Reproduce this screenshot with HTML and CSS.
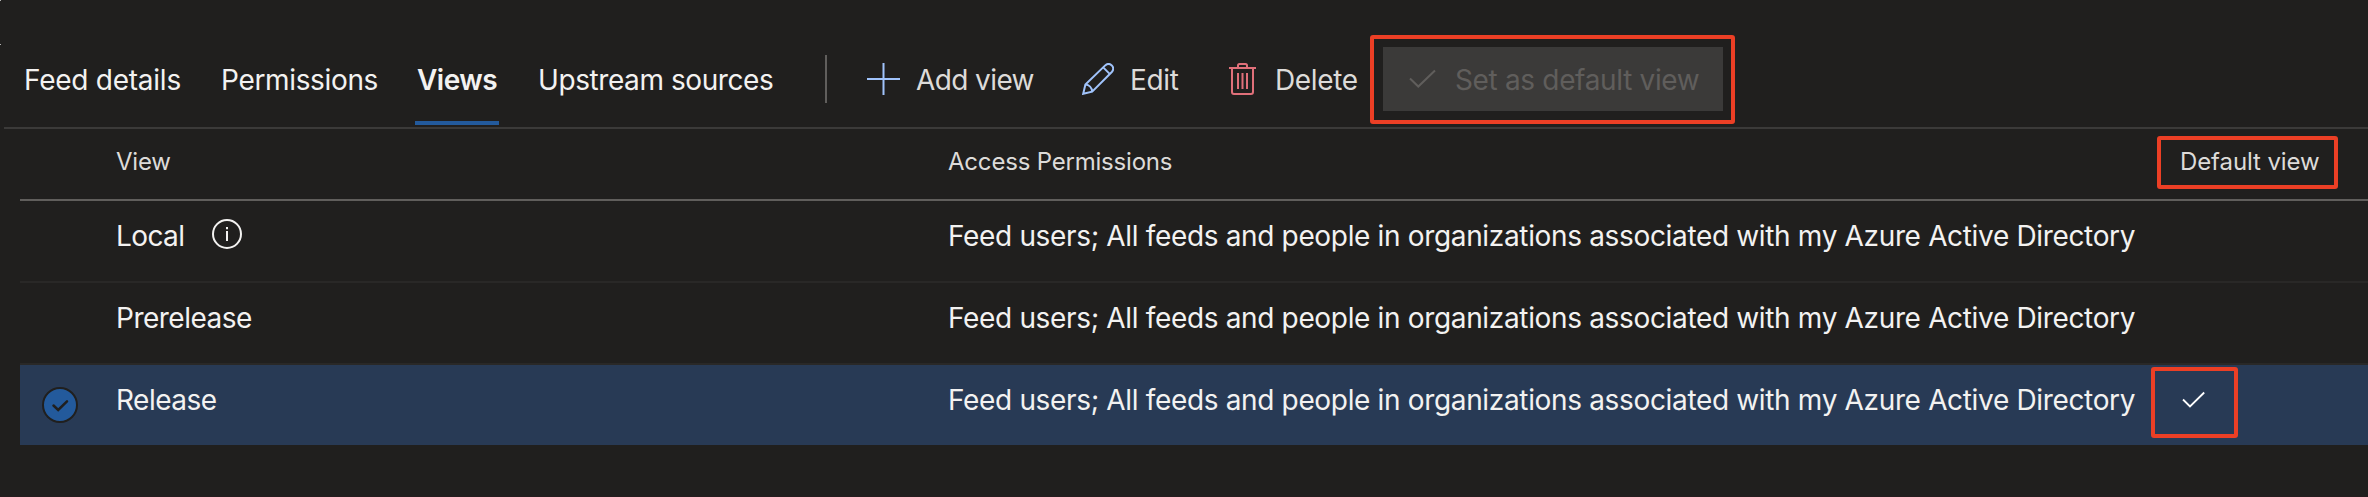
FILE: index.html
```
<!DOCTYPE html>
<html lang="en">
<head>
<meta charset="utf-8">
<title>Feed settings</title>
<link rel="stylesheet" href="styles.css">
</head>
<body>
<i class="corner corner-top"></i>
<i class="corner corner-bottom"></i>
<header class="toolbar">
  <nav class="tabs">
    <a class="tab tab-details"><span>Feed details</span></a>
    <a class="tab tab-permissions"><span>Permissions</span></a>
    <a class="tab tab-views active"><span>Views</span></a>
    <a class="tab tab-upstream"><span>Upstream sources</span></a>
  </nav>
  <div class="divider"></div>
  <div class="commands">
    <button class="command add"><svg class="icon" width="34" height="32" viewBox="0 0 34 32"><path d="M16.500 0v32M0 16h33" stroke="#a0c3fb" stroke-width="2" fill="none"/></svg><span>Add view</span></button>
    <button class="command edit"><svg class="icon" width="32" height="32" viewBox="0 0 32 32" fill="none" stroke="#a0c3fb" stroke-width="2"><path d="M1.200 30.800 3.400 21.500 23.200 2.400a5 5 0 0 1 6.600 0 5 5 0 0 1 0 6.600L10.200 28.600ZM21.200 4.400l6.700 6.700M3.400 21.500c3.600.3 6.500 3.200 6.800 7.100"/></svg><span>Edit</span></button>
    <button class="command delete"><svg class="icon" width="27" height="32" viewBox="0 0 27 32" fill="none" stroke="#e0707a" stroke-width="2"><path d="M0 5h27M9 5V2.500Q9 1 10.500 1h6Q18 1 18 2.500V5M3 5v24q0 2 2 2h17q2 0 2-2V5M9 10v16M13.500 10v16M18 10v16"/></svg><span>Delete</span></button>
    <div class="callout callout-button">
      <button class="command default" disabled><svg class="icon" width="28" height="20" viewBox="0 0 28 20"><path d="m1 9.500 8.300 8L26 1.500" stroke="#605e5c" stroke-width="2" fill="none"/></svg><span>Set as default view</span></button>
    </div>
  </div>
</header>
<main class="table">
  <div class="row head">
    <div class="name"><span>View</span></div>
    <div class="access"><span>Access Permissions</span></div>
    <div class="callout callout-head"><span>Default view</span></div>
  </div>
  <div class="row">
    <div class="name"><span class="local">Local</span><svg class="info" width="30" height="30" viewBox="0 0 30 30"><circle cx="15" cy="15" r="14" fill="none" stroke="#f3f2f1" stroke-width="2"/><path d="M15 12v10M15 8v2.200" stroke="#f3f2f1" stroke-width="2"/></svg></div>
    <div class="access"><span>Feed users; All feeds and people in organizations associated with my Azure Active Directory</span></div>
  </div>
  <div class="row">
    <div class="name"><span class="short">Prerelease</span></div>
    <div class="access"><span>Feed users; All feeds and people in organizations associated with my Azure Active Directory</span></div>
  </div>
  <div class="row selected">
    <div class="mark"><svg width="36" height="36" viewBox="0 0 36 36"><circle cx="18" cy="18" r="17" fill="#235a9c" stroke="#201f1e" stroke-width="2"/><path d="m11.500 18.500 4.700 4.500L25 14.300" fill="none" stroke="#201f1e" stroke-width="2.500" stroke-linecap="round"/></svg></div>
    <div class="name"><span class="short">Release</span></div>
    <div class="access"><span>Feed users; All feeds and people in organizations associated with my Azure Active Directory</span></div>
    <div class="callout callout-check"><svg width="24" height="18" viewBox="0 0 24 18"><path d="m1 8.500 7 7L22.200 1.500" fill="none" stroke="#fff" stroke-width="1.800"/></svg></div>
  </div>
</main>
</body>
</html>
```
FILE: styles.css
```
* { box-sizing: border-box; }
body {
  margin: 0;
  height: 497px;
  overflow: hidden;
  background: #201f1e;
  border-bottom: 1px solid #251c1e;
  color: #f3f2f1;
  font: 28px/34px Inter, "Liberation Sans", sans-serif;
  letter-spacing: -0.34px;
  white-space: nowrap;
}
.corner { position: absolute; left: 0; width: 1px; height: 1px; background: #b5b5b4; }
.corner-top { top: 0; }
.corner-bottom { top: 44px; }
.toolbar {
  display: flex;
  height: 129px;
  margin-left: 4px;
  padding-top: 33px;
  border-bottom: 2px solid #3b3a39;
}
.tabs { display: flex; height: 92px; width: 821px; }
.tab { padding-top: 30px; }
.tab-details { margin-left: 20px; width: 197px; letter-spacing: -0.25px; }
.tab-permissions { width: 194px; }
.tab-views { width: 84px; padding-left: 2px; letter-spacing: -0.5px; }
.tab-upstream { margin-left: 39px; letter-spacing: -0.42px; }
.active { font-weight: 600; border-bottom: 4px solid #235a9c; }
.divider { width: 2px; height: 48px; margin-top: 22px; background: #605e5c; }
.commands { display: flex; align-items: flex-start; }
.command {
  display: flex;
  align-items: center;
  flex: none;
  height: 64px;
  margin-top: 14px;
  padding: 0;
  border: 0;
  background: none;
  color: #dddbd9;
  font: inherit;
  letter-spacing: inherit;
}
.command span { padding-top: 2px; }
.icon { flex: none; }
.add { width: 255px; padding-left: 40px; letter-spacing: -0.6px; }
.add span { margin-left: 15px; }
.edit { width: 147px; }
.edit span { margin-left: 16px; }
.delete { width: 141px; }
.delete span { margin-left: 19px; }
.callout { border: 4px solid #ec3f25; border-radius: 3px; }
.callout-button { width: 365px; height: 89px; margin-top: 2px; padding: 8px 9px; }
.callout-button .command { width: 340px; margin: 0; padding-left: 26px; background: #3b3a39; color: #605e5c; }
.default span { margin-left: 18px; }
.table { margin-left: 20px; }
.row { position: relative; display: flex; height: 82px; border-bottom: 2px solid #292827; padding: 18px 0 0 96px; }
.head { height: 72px; padding-top: 16px; border-bottom-color: #605e5c; font-size: 24px; letter-spacing: -0.2px; color: #dddbd9; }
.name { display: flex; width: 832px; }
.local { width: 96px; letter-spacing: -0.6px; }
.short { letter-spacing: -0.5px; }
.selected { height: 80px; background: #283a55; border: 0; }
.mark { position: absolute; left: 22px; top: 22px; height: 36px; }
.mark svg, .callout svg { display: block; }
.callout-head { position: absolute; left: 2137px; top: 7px; width: 181px; height: 53px; padding: 5px 0 0 19px; letter-spacing: -0.1px; }
.callout-check { position: absolute; left: 2131px; top: 2px; width: 87px; height: 71px; padding: 20px 0 0 27px; }
```
